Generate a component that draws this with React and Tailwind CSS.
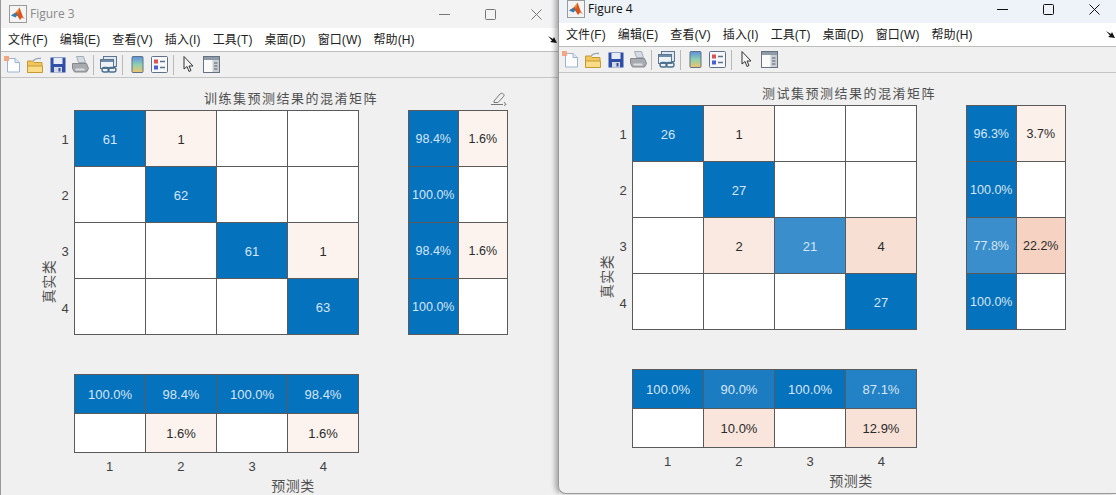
const menus = ["文件(F)", "编辑(E)", "查看(V)", "插入(I)", "工具(T)", "桌面(D)", "窗口(W)", "帮助(H)"];

const figure3 = {
  name: "Figure 3",
  title: "训练集预测结果的混淆矩阵",
  matrix: [
    ["61", "#0472bd", "1", "#fdf3ee", "", "#fff", "", "#fff"],
    ["", "#fff", "62", "#0472bd", "", "#fff", "", "#fff"],
    ["", "#fff", "", "#fff", "61", "#0472bd", "1", "#fdf3ee"],
    ["", "#fff", "", "#fff", "", "#fff", "63", "#0472bd"],
  ],
  side: [
    ["98.4%", "#0472bd", "1.6%", "#fdf3ee"],
    ["100.0%", "#0472bd", "", "#fff"],
    ["98.4%", "#0472bd", "1.6%", "#fdf3ee"],
    ["100.0%", "#0472bd", "", "#fff"],
  ],
  bottom: [
    ["100.0%", "#0472bd", "98.4%", "#0472bd", "100.0%", "#0472bd", "98.4%", "#0472bd"],
    ["", "#fff", "1.6%", "#fdf3ee", "", "#fff", "1.6%", "#fdf3ee"],
  ],
};

const figure4 = {
  name: "Figure 4",
  title: "测试集预测结果的混淆矩阵",
  matrix: [
    ["26", "#0472bd", "1", "#fbf0ea", "", "#fff", "", "#fff"],
    ["", "#fff", "27", "#0472bd", "", "#fff", "", "#fff"],
    ["", "#fff", "2", "#f9e9e1", "21", "#3a8ecb", "4", "#f7dfd3"],
    ["", "#fff", "", "#fff", "", "#fff", "27", "#0472bd"],
  ],
  side: [
    ["96.3%", "#0472bd", "3.7%", "#fbf0ea"],
    ["100.0%", "#0472bd", "", "#fff"],
    ["77.8%", "#3a8ecb", "22.2%", "#f6d2c3"],
    ["100.0%", "#0472bd", "", "#fff"],
  ],
  bottom: [
    ["100.0%", "#0472bd", "90.0%", "#1b7cc2", "100.0%", "#0472bd", "87.1%", "#2381c5"],
    ["", "#fff", "10.0%", "#f9e5db", "", "#fff", "12.9%", "#f8e1d7"],
  ],
};

function MatlabLogo() {
  return (
    <svg width="18" height="18" viewBox="0 0 18 18">
      <rect x="0.5" y="0.5" width="17" height="17" fill="#f4f4f4" stroke="#9a9a9a" />
      <path d="M2 10.5 6 8l2-2 2.5-3.5L14 12l2 2-3-1.5-2 2.5-2.5-4L6 9.500z" fill="#d9541e" />
      <path d="M2 10.5 6 8l2.500 2-2 2.500z" fill="#2f7fb8" />
      <path d="M8 6l2.500-3.500L9 9z" fill="#f0a030" />
    </svg>
  );
}

function NewIcon() {
  return (
    <svg width="17" height="17" viewBox="0 0 17 17">
      <path d="M3.500 2.500h7.500l4.500 4v9.500h-12z" fill="#fdfdff" stroke="#9db4d0" />
      <path d="M11 2.500v4h4.500" fill="#dfe8f3" stroke="#9db4d0" />
      <rect x="0" y="0" width="5" height="5" fill="#f4a582" />
    </svg>
  );
}

function OpenIcon() {
  return (
    <svg width="16" height="16" viewBox="0 0 16 16">
      <path d="M6 4c2-2.500 4.500-3 8-2.500" fill="none" stroke="#9aa7b5" strokeWidth="1.300" />
      <path d="M0.500 4h5l1.500 1.500h8v10h-14.500z" fill="#f2c65a" stroke="#c49a35" />
      <path d="M0.500 9h15v6.500h-15z" fill="#f9dc85" stroke="#c49a35" />
    </svg>
  );
}

function SaveIcon() {
  return (
    <svg width="16" height="16" viewBox="0 0 16 16">
      <rect x="0.500" y="0.500" width="15" height="15" fill="#2f4ea6" />
      <rect x="3.500" y="1" width="9" height="6" fill="#e6ebf5" />
      <rect x="4" y="10" width="8" height="5.500" fill="#d5d9e2" />
      <rect x="8.500" y="11" width="2" height="3.500" fill="#2f4ea6" />
    </svg>
  );
}

function PrintIcon() {
  return (
    <svg width="17" height="17" viewBox="0 0 17 17">
      <path d="M4.500 0.500h7l2 6h-7z" fill="#d4dbe2" stroke="#a3adb7" />
      <path d="M0.500 7.500h14l2 5-2 3.500h-12l-2-3.500z" fill="#a7abb0" stroke="#85898e" />
      <rect x="3.500" y="12.500" width="9" height="2" fill="#dedede" />
    </svg>
  );
}

function LinkIcon() {
  return (
    <svg width="17" height="17" viewBox="0 0 17 17">
      <rect x="3.500" y="0.500" width="13" height="10" fill="#dfe7f0" stroke="#5c7690" />
      <rect x="0.500" y="3.500" width="13" height="9" fill="#eef3f8" stroke="#5c7690" />
      <rect x="1" y="4" width="12" height="2" fill="#6d8cab" />
      <rect x="2" y="11.500" width="7" height="4.500" rx="2.200" fill="none" stroke="#49708f" strokeWidth="1.400" />
      <rect x="8" y="11.500" width="8" height="4.500" rx="2.200" fill="none" stroke="#49708f" strokeWidth="1.400" />
    </svg>
  );
}

function ColorbarIcon() {
  return (
    <svg width="13" height="17" viewBox="0 0 13 17">
      <defs>
        <linearGradient id="cbar" x1="0" y1="0" x2="0" y2="1">
          <stop offset="0" stopColor="#5c8fe0" />
          <stop offset="0.5" stopColor="#8fd0b0" />
          <stop offset="1" stopColor="#f2c46a" />
        </linearGradient>
      </defs>
      <rect x="1" y="0.500" width="11" height="16" rx="1" fill="url(#cbar)" stroke="#5f7186" />
    </svg>
  );
}

function LegendIcon() {
  return (
    <svg width="17" height="17" viewBox="0 0 17 17">
      <rect x="0.500" y="0.500" width="16" height="16" rx="1" fill="#f5f7fa" stroke="#5f7186" />
      <rect x="3" y="3.500" width="4" height="4" fill="#d9534f" />
      <rect x="3" y="9.500" width="4" height="4" fill="#4a5fd6" />
      <path d="M9 5.500h5M9 11.500h5" stroke="#5f7186" strokeWidth="1.300" />
    </svg>
  );
}

function CursorIcon() {
  return (
    <svg width="11" height="17" viewBox="0 0 11 17">
      <path d="M1 0.500v12.500l3-2.500 2 5 2-1-2-4.500h4z" fill="#f4f4f4" stroke="#333" />
    </svg>
  );
}

function PanelIcon() {
  return (
    <svg width="17" height="17" viewBox="0 0 17 17">
      <rect x="0.500" y="0.500" width="16" height="16" fill="#fafafa" stroke="#66727f" />
      <rect x="1" y="1" width="15" height="3" fill="#8d9aa7" />
      <rect x="9.500" y="4" width="6.500" height="12" fill="#c9ced3" />
      <path d="M11 7h3.500M11 10h3.500M11 13h3.500" stroke="#55606b" />
    </svg>
  );
}

function Sep({ className = "" }) {
  return <div className={`h-[20px] w-px bg-[#b9b9b9] ${className}`} />;
}

function Toolbar() {
  return (
    <div className="flex h-[26px] items-center border-b border-[#c4c4c4] bg-[#f0f0f0]">
      <div className="flex w-[22px] justify-center"><NewIcon /></div>
      <div className="flex w-[24px] justify-center"><OpenIcon /></div>
      <div className="flex w-[22px] justify-center"><SaveIcon /></div>
      <div className="flex w-[22px] justify-center"><PrintIcon /></div>
      <Sep className="ml-[2px]" />
      <div className="flex w-[28px] justify-center"><LinkIcon /></div>
      <Sep />
      <div className="flex w-[28px] justify-center"><ColorbarIcon /></div>
      <div className="flex w-[17px] justify-center"><LegendIcon /></div>
      <Sep className="ml-[5px]" />
      <div className="flex w-[29px] justify-center"><CursorIcon /></div>
      <div className="flex w-[17px] justify-center"><PanelIcon /></div>
    </div>
  );
}

function WindowButtons({ color }) {
  return (
    <div className="flex h-full items-center" style={{ color }}>
      <div className="flex h-full w-[46px] items-center justify-center">
        <svg width="11" height="11" viewBox="0 0 11 11"><path d="M0 5.500h11" stroke="currentColor" /></svg>
      </div>
      <div className="flex h-full w-[46px] items-center justify-center">
        <svg width="11" height="11" viewBox="0 0 11 11"><rect x="0.500" y="0.500" width="10" height="10" rx="1" fill="none" stroke="currentColor" /></svg>
      </div>
      <div className="flex h-full w-[46px] items-center justify-center">
        <svg width="11" height="11" viewBox="0 0 11 11"><path d="M0.500 0.500l10 10M10.500 0.500l-10 10" stroke="currentColor" /></svg>
      </div>
    </div>
  );
}

function Cells({ rows, cols, className, cellClass }) {
  return (
    <div className={`grid gap-px bg-[#5a5a5a] p-px ${className}`}>
      {rows.flatMap((row, r) =>
        Array.from({ length: cols }, (_, c) => {
          const text = row[c * 2];
          const bg = row[c * 2 + 1];
          const dark = bg !== "#fff" && !bg.startsWith("#f");
          return (
            <div
              key={`${r}-${c}`}
              className={`flex items-center justify-center ${cellClass} ${dark ? "text-[#d6e6f4]" : "text-[#2a2a2a]"}`}
              style={{ backgroundColor: bg }}
            >
              {text}
            </div>
          );
        })
      )}
    </div>
  );
}

function PenIcon() {
  return (
    <svg width="17" height="15" viewBox="0 0 17 15" className="text-[#777]">
      <path d="M4 10 10 3c1-1 2.500-1 3.500 0s.5 2-.5 3l-5 5.500H4z" fill="none" stroke="currentColor" />
      <path d="M1 13.500h12M14 11l2 2.500-2 1" fill="none" stroke="currentColor" />
    </svg>
  );
}

function FigureWindow({ fig, active, className }) {
  return (
    <div className={`absolute flex w-[559px] flex-col overflow-hidden border-l border-[#9a9a9a] bg-[#f0f0f0] ${className}`}>
      <div className={`flex h-[28px] items-center justify-between ${active ? "bg-[#eef3f9]" : "bg-[#f3f3f3]"}`}>
        <div className="flex items-center gap-[3px] pl-[8px]">
          <MatlabLogo />
          <span className={`font-['Open_Sans',sans-serif] text-[12px] ${active ? "text-[#111]" : "text-[#8a8a8a]"}`}>{fig.name}</span>
        </div>
        <WindowButtons color={active ? "#111" : "#777"} />
      </div>
      <div className="flex h-[24px] items-center justify-between border-b border-[#bcbcbc] bg-white pl-[7px] pr-[2px]">
        <div className="flex gap-[12px] font-['Liberation_Sans','Noto_Sans_CJK_SC',sans-serif] text-[12px] tracking-[0.1px] text-[#222]">
          {menus.map((m) => <span key={m}>{m}</span>)}
        </div>
        <svg width="9" height="8" viewBox="0 0 9 8"><path d="M0 0l5 3 1-2 3 6-7-1 2-1.500z" fill="#111" /></svg>
      </div>
      <Toolbar />
      <div className="flex h-[32px] items-end pb-[2px] pl-[39px]">
        <div className="relative ml-[34px] flex h-[21px] w-[434px] items-center justify-center font-['Noto_Sans_CJK_SC',sans-serif] text-[13px] tracking-[1.5px] text-[#505050]">
          {fig.title}
          {!active && <div className="absolute right-[1px] top-[4px]"><PenIcon /></div>}
        </div>
      </div>
      <div className="flex pl-[39px] font-['Liberation_Sans',sans-serif]">
        <div className="flex h-[343px] w-[18px] items-center justify-center">
          <span className="-rotate-90 whitespace-nowrap font-['Noto_Sans_CJK_SC',sans-serif] text-[14px] tracking-[0.5px] text-[#505050]">真实类</span>
        </div>
        <div className="grid h-[225px] w-[16px] grid-rows-4 text-[13px] text-[#404040]">
          {[1, 2, 3, 4].map((n) => (
            <div key={n} className="flex items-center justify-center pr-[2px] pt-[3px]">{n}</div>
          ))}
        </div>
        <div className="w-[434px]">
          <div className="flex justify-between">
            <Cells rows={fig.matrix} cols={4} cellClass="pt-[2px]" className="h-[225px] w-[285px] grid-cols-4 grid-rows-4 text-[13px]" />
            <Cells rows={fig.side} cols={2} cellClass="pt-[2px]" className="h-[225px] w-[100px] grid-cols-2 grid-rows-4 text-[12.500px]" />
          </div>
          <Cells rows={fig.bottom} cols={4} cellClass="pt-[1px]" className="mt-[39px] h-[79px] w-[285px] grid-cols-4 grid-rows-2 text-[13px]" />
          <div className="grid h-[24px] w-[285px] grid-cols-4 pt-[3px] text-[13px] text-[#404040]">
            {[1, 2, 3, 4].map((n) => (
              <div key={n} className="flex items-center justify-center">{n}</div>
            ))}
          </div>
          <div className="flex h-[16px] items-center justify-center pl-[4px] font-['Noto_Sans_CJK_SC',sans-serif] text-[14px] tracking-[0.5px] text-[#505050]">预测类</div>
        </div>
      </div>
    </div>
  );
}

export default function App() {
  return (
    <div className="relative h-[495px] w-[1116px] overflow-hidden bg-white">
      <FigureWindow fig={figure3} className="left-0 top-0 h-[500px]" />
      <FigureWindow
        fig={figure4}
        active
        className="left-[558px] top-[-5px] h-[499px] rounded-bl-[8px] border-b shadow-[-3px_0_5px_rgba(0,0,0,0.3)]"
      />
    </div>
  );
}
